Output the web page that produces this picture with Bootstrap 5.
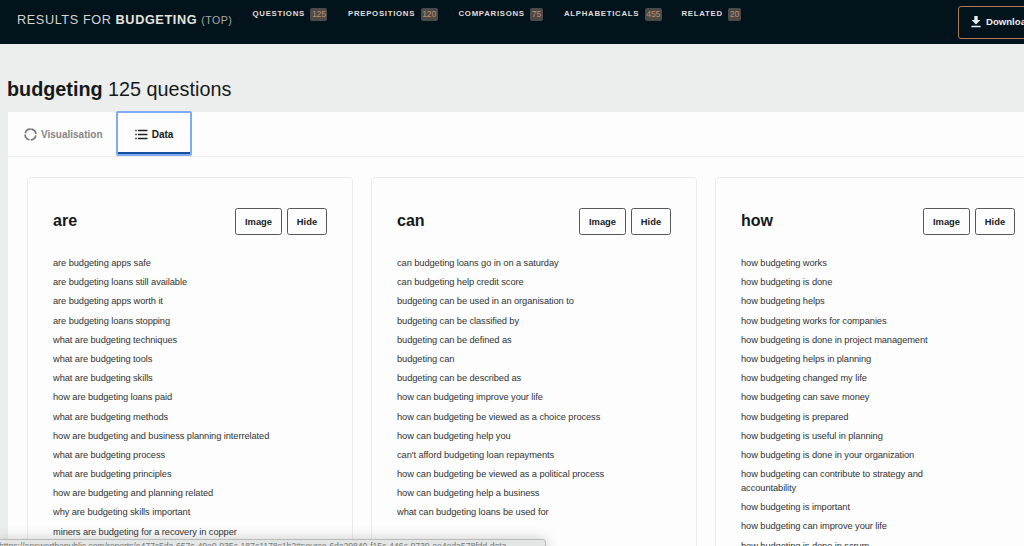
<!DOCTYPE html>
<html lang="en">
<head>
<meta charset="utf-8">
<meta name="viewport" content="width=device-width, initial-scale=1">
<title>Results for budgeting</title>
<link href="https://cdn.jsdelivr.net/npm/bootstrap@5.3.0/dist/css/bootstrap.min.css" rel="stylesheet">
<style>
body{font-family:"Liberation Sans",Arial,sans-serif;background:#eceeed;color:#16191a;height:546px}
.topbar{height:44px;background:#02131c;color:#d6d4d1;padding-left:17px}
.result-title{font-size:12.7px;line-height:16px;letter-spacing:.6px;width:235.5px;padding-top:12px}
.result-title small{font-size:10.7px;letter-spacing:.4px;color:#aaa9a7}
.result-title b{color:#e6e3df}
.topnav{padding-top:8px}
.topnav a{font-size:7.8px;font-weight:700;letter-spacing:.72px;line-height:12px;color:#e0dedb}
.count{font-size:8.6px;line-height:13px;height:12.5px;border-radius:2px;background:#4c4b49;color:#bd8c69;font-weight:400;padding:0 1.5px;margin-left:5.5px;letter-spacing:-.1px}
.download{position:absolute;left:958px;top:6px;width:110px;height:32.5px;border:1px solid #a97c5a;border-radius:3px;color:#eee;font-size:9.6px;font-weight:700;padding-left:12px}
.page-title{font-size:19.8px;line-height:26px;margin:32px 0 10px 7px;font-weight:400}
.panel{margin-left:8px;width:1050px;height:434px;background:#fdfdfd}
.tabs{height:45px;border-bottom:1px solid #ebecec;font-size:10px;font-weight:700}
.tab-vis{color:#858686;width:108px;padding-left:16px}
.tab-data{width:76px;height:45px;margin-top:-1px;padding-top:1px;border:2.5px solid #7faaf6;border-radius:2px;box-shadow:inset 0 -2px #134f9f;color:#16191a}
.boards{padding:20px 0 0 19px;gap:18px}
.board{width:326px;height:390px;border:1px solid #eaebeb;border-radius:3px;background:#fdfdfd;padding:30px 25px 0}
.board h2{font-size:16px;line-height:26px;font-weight:700}
.board .btn{--bs-btn-border-color:#55585a;--bs-btn-color:#202223;font-size:9.4px;font-weight:700;line-height:12px;height:27px;border-radius:2.5px;padding:0}
.b-image{width:47px}.b-hide{width:40px}
.board ul{margin:21px 0 0;font-size:9.3px;line-height:14px;letter-spacing:-.085px;color:#303334}
.board li{margin-bottom:5.2px}
.status{left:-2px;top:539px;width:548px;height:20px;background:#e4e6e5;border:1px solid #b9bbba;border-radius:0 3px 0 0;font-size:8.8px;letter-spacing:-.13px;line-height:12px;color:#777978;box-shadow:0 0 14px rgba(0,0,0,.2);white-space:nowrap}
</style>
</head>
<body class="overflow-hidden position-relative">
<header class="topbar d-flex align-items-start">
  <div class="result-title text-nowrap flex-shrink-0">RESULTS FOR <b>BUDGETING</b> <small>(TOP)</small></div>
  <nav class="topnav d-flex text-nowrap">
    <a class="d-flex text-decoration-none" style="width:95.5px">QUESTIONS<span class="count">125</span></a>
    <a class="d-flex text-decoration-none" style="width:110.5px">PREPOSITIONS<span class="count">120</span></a>
    <a class="d-flex text-decoration-none" style="width:105.5px">COMPARISONS<span class="count">75</span></a>
    <a class="d-flex text-decoration-none" style="width:117.5px">ALPHABETICALS<span class="count">455</span></a>
    <a class="d-flex text-decoration-none">RELATED<span class="count">20</span></a>
  </nav>
  <div class="download d-flex align-items-center">
    <svg width="10" height="12" viewBox="0 0 10 12" fill="#eee" style="margin-right:5px"><path d="M3.3 0h3.4v4H9.4L5 8.4.6 4h2.7zM.4 9.8h9.2v1.5H.4z"/></svg>Download
  </div>
</header>
<h1 class="page-title"><b>budgeting</b> 125 questions</h1>
<main class="panel">
  <div class="tabs d-flex">
    <div class="tab-vis d-flex align-items-center"><svg width="13" height="13" viewBox="0 0 13 13" fill="none" stroke="#777" stroke-width="1.7" style="margin-right:4px"><circle cx="6.5" cy="6.5" r="5.4" stroke-dasharray="7.1 1.38" transform="rotate(-83 6.5 6.5)"/></svg>Visualisation</div>
    <div class="tab-data d-flex align-items-center justify-content-center"><svg width="13" height="11" viewBox="0 0 13 11" fill="none" stroke="#222" stroke-width="1.3" style="margin-right:4px"><path d="M3 1.5h9.5M3 5.5h9.5M3 9.5h9.5M.3 1.5h1.4M.3 5.5h1.4M.3 9.5h1.4"/></svg>Data</div>
  </div>
  <div class="boards d-flex">
    <section class="board flex-shrink-0">
      <div class="d-flex justify-content-between"><h2 class="mb-0">are</h2><div class="d-flex" style="gap:5px"><button class="btn b-image">Image</button><button class="btn b-hide">Hide</button></div></div>
      <ul class="list-unstyled">
        <li>are budgeting apps safe</li><li>are budgeting loans still available</li><li>are budgeting apps worth it</li><li>are budgeting loans stopping</li><li>what are budgeting techniques</li><li>what are budgeting tools</li><li>what are budgeting skills</li><li>how are budgeting loans paid</li><li>what are budgeting methods</li><li>how are budgeting and business planning interrelated</li><li>what are budgeting process</li><li>what are budgeting principles</li><li>how are budgeting and planning related</li><li>why are budgeting skills important</li><li>miners are budgeting for a recovery in copper</li>
      </ul>
    </section>
    <section class="board flex-shrink-0">
      <div class="d-flex justify-content-between"><h2 class="mb-0">can</h2><div class="d-flex" style="gap:5px"><button class="btn b-image">Image</button><button class="btn b-hide">Hide</button></div></div>
      <ul class="list-unstyled">
        <li>can budgeting loans go in on a saturday</li><li>can budgeting help credit score</li><li>budgeting can be used in an organisation to</li><li>budgeting can be classified by</li><li>budgeting can be defined as</li><li>budgeting can</li><li>budgeting can be described as</li><li>how can budgeting improve your life</li><li>how can budgeting be viewed as a choice process</li><li>how can budgeting help you</li><li>can't afford budgeting loan repayments</li><li>how can budgeting be viewed as a political process</li><li>how can budgeting help a business</li><li>what can budgeting loans be used for</li>
      </ul>
    </section>
    <section class="board flex-shrink-0">
      <div class="d-flex justify-content-between"><h2 class="mb-0">how</h2><div class="d-flex" style="gap:5px"><button class="btn b-image">Image</button><button class="btn b-hide">Hide</button></div></div>
      <ul class="list-unstyled">
        <li>how budgeting works</li><li>how budgeting is done</li><li>how budgeting helps</li><li>how budgeting works for companies</li><li>how budgeting is done in project management</li><li>how budgeting helps in planning</li><li>how budgeting changed my life</li><li>how budgeting can save money</li><li>how budgeting is prepared</li><li>how budgeting is useful in planning</li><li>how budgeting is done in your organization</li><li>how budgeting can contribute to strategy and<br>accountability</li><li>how budgeting is important</li><li>how budgeting can improve your life</li><li>how budgeting is done in scrum</li>
      </ul>
    </section>
  </div>
</main>
<div class="status position-absolute">https://answerthepublic.com/reports/e477c5da-657c-49e0-935c-187c1178c1b2#source-6da29840-f15c-446c-9739-ae4eda578fdd-data</div>
<script src="https://cdn.jsdelivr.net/npm/bootstrap@5.3.0/dist/js/bootstrap.bundle.min.js"></script>
</body>
</html>
